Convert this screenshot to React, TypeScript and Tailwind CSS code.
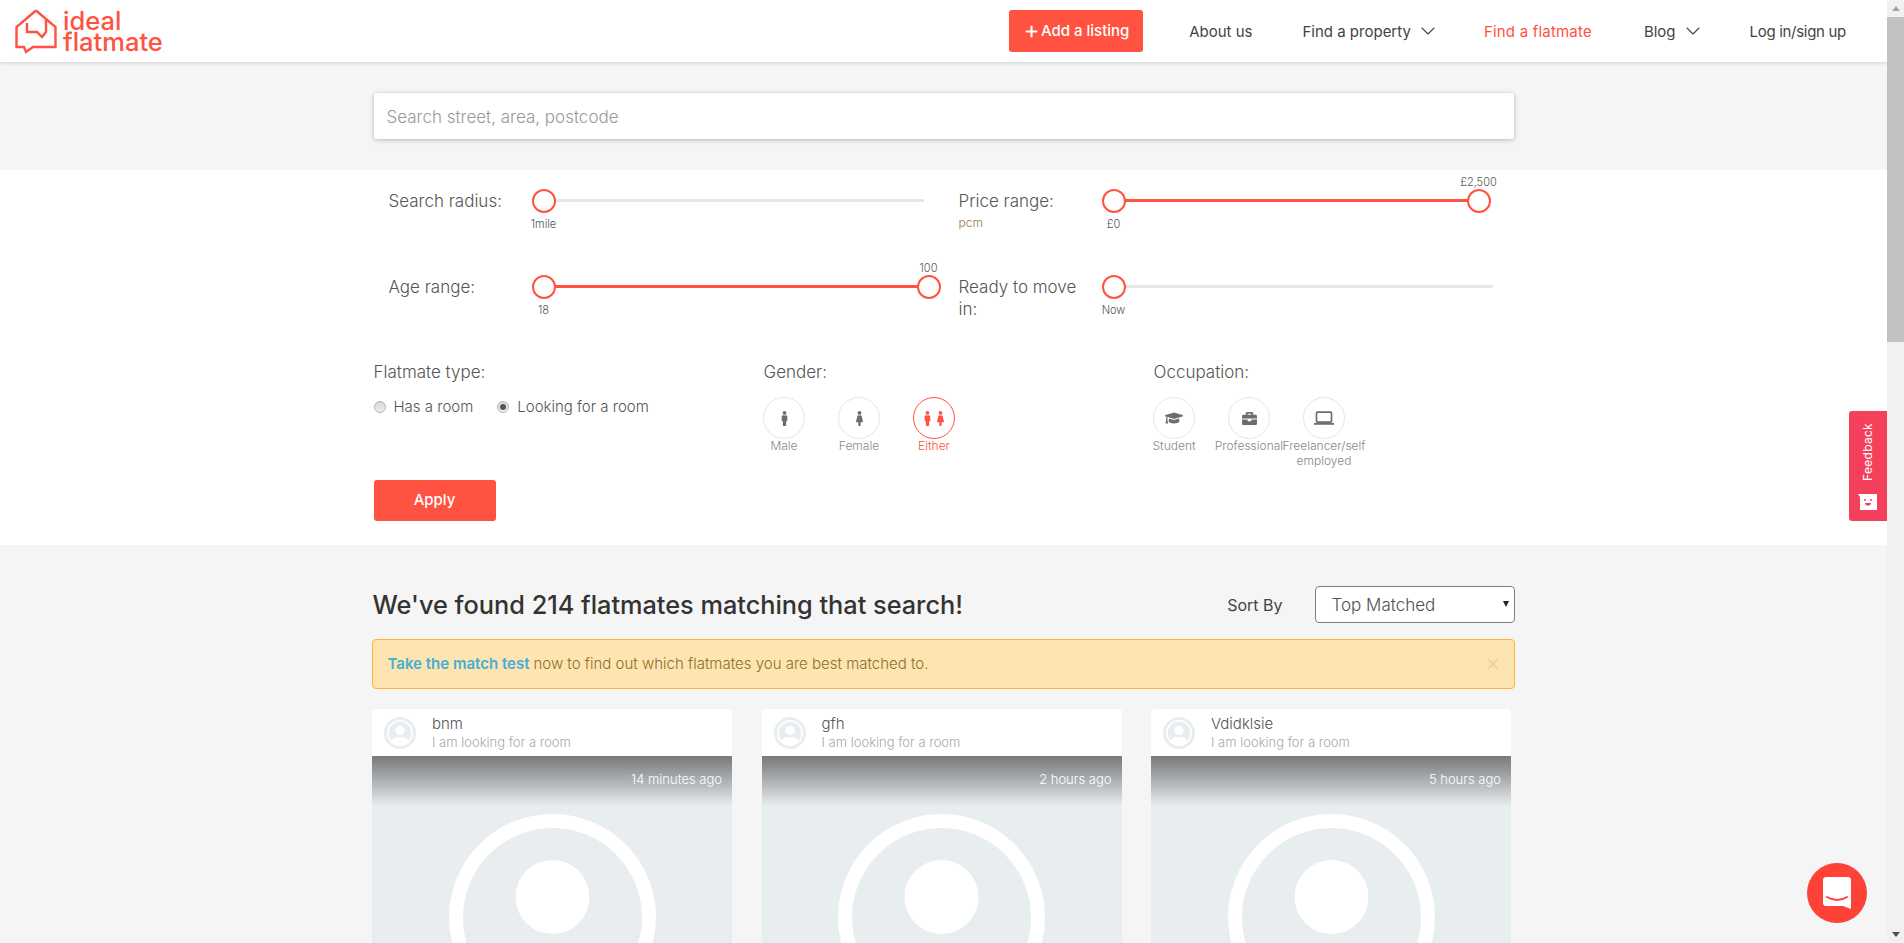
import React from "react";
import { Plus, ChevronDown, X } from "lucide-react";
import { FaMale, FaFemale, FaGraduationCap, FaBriefcase } from "react-icons/fa";
import { MdLaptop } from "react-icons/md";

const cards = [
  { name: "bnm", ago: "14 minutes ago" },
  { name: "gfh", ago: "2 hours ago" },
  { name: "Vdidklsie", ago: "5 hours ago" },
];

function Logo() {
  return (
    <div className="flex items-center">
      <svg width="42" height="45" viewBox="0 0 42 45" fill="none" stroke="#ff5240" strokeWidth="2.4">
        <path d="M21 1.5 L1.5 18 V38 H9 L11 43 L18 38 H40.5 V18 L31 10" />
        <path d="M21 1.5 L31 10 V23 L27 28 L22 23 H12 V14" />
      </svg>
      <div className="ml-[6px] text-[25.5px] leading-[21px] font-medium text-[#ff5240]">
        ideal
        <br />
        flatmate
      </div>
    </div>
  );
}

function Header() {
  return (
    <header className="relative z-10 flex h-[62px] items-center bg-white pl-[15px] pr-[41px] shadow-[0_1px_4px_rgba(0,0,0,0.15)]">
      <Logo />
      <nav className="ml-auto flex items-center text-[15px] text-[#444]">
        <a className="flex h-[42px] w-[134px] items-center justify-center rounded-[3px] bg-[#ff5240] pt-[1px] font-medium text-white">
          <Plus size={17} strokeWidth={3} />
          <span className="ml-[1px]">Add a listing</span>
        </a>
        <a className="ml-[46px] pt-[2px]">About us</a>
        <a className="ml-[50px] pt-[2px]">Find a property</a>
        <ChevronDown size={24} strokeWidth={1.1} className="ml-[5px]" />
        <a className="ml-[44px] pt-[2px] tracking-[0.2px] text-[#ff5240]">Find a flatmate</a>
        <a className="ml-[52px] pt-[2px]">Blog</a>
        <ChevronDown size={24} strokeWidth={1.1} className="ml-[5px]" />
        <a className="ml-[45px] pt-[2px] tracking-[-0.3px]">Log in/sign up</a>
      </nav>
    </header>
  );
}

function Thumb({ className }: { className: string }) {
  return <span className={"absolute top-0 h-[24px] w-[24px] rounded-full border-2 border-[#ff5240] bg-white " + className} />;
}

function SliderRow({
  label,
  note,
  fill,
  width,
  low,
  high,
}: {
  label: React.ReactNode;
  note?: string;
  fill: boolean;
  width: string;
  low: string;
  high?: string;
}) {
  return (
    <div className="flex h-[86px] items-start">
      <div className="w-[143px] pt-[1px] text-[17px] leading-[22px] font-light text-[#555]">
        {label}
        {note && <div className="mt-[3px] text-[12px] leading-[16px] text-[#a0784a]">{note}</div>}
      </div>
      <div className={"relative h-[24px] " + width}>
        <div className={"absolute top-[10px] left-[12px] right-0 h-[3px] " + (fill ? "bg-[#ff5240] right-[12px]" : "bg-[#e6e6e6]")} />
        <Thumb className="left-0" />
        {high && <Thumb className="right-0" />}
        <span className="absolute top-[27px] left-[12px] -translate-x-1/2 whitespace-nowrap text-[11px] leading-[16px] font-light text-[#555]">{low}</span>
        {high && <span className="absolute top-[-15px] right-[12px] translate-x-1/2 whitespace-nowrap text-[11px] leading-[16px] font-light text-[#555]">{high}</span>}
      </div>
    </div>
  );
}

function Radio({ checked, label }: { checked?: boolean; label: string }) {
  return (
    <div className="flex items-center">
      <span className="flex h-[12px] w-[12px] items-center justify-center rounded-full border border-[#b5b5b5] bg-gradient-to-b from-[#d8d8d8] to-[#f0f0f0]">
        {checked && <span className="h-[6px] w-[6px] rounded-full bg-[#555]" />}
      </span>
      <span className="ml-[8px] text-[15px] leading-[20px] font-light text-[#555]">{label}</span>
    </div>
  );
}

function Choice({ icon, label, active }: { icon: React.ReactNode; label: React.ReactNode; active?: boolean }) {
  return (
    <div className={"flex w-[75px] flex-col items-center text-center " + (active ? "text-[#ff5240]" : "text-[#6d6d6d]")}>
      <div className={"flex h-[42px] w-[42px] items-center justify-center rounded-full border " + (active ? "border-[#ff5240]" : "border-[#e6e6e6]")}>
        {icon}
      </div>
      <div className={"mt-[-3px] whitespace-nowrap pt-[2px] text-[12px] leading-[15px] font-light " + (active ? "text-[#ff5240]" : "text-[#888]")}>{label}</div>
    </div>
  );
}

function Filters() {
  return (
    <section className="h-[375px] bg-white">
      <div className="mx-auto w-[1144px] pl-[2px]">
        <div className="grid grid-cols-[570px_1fr] pt-[19px] pl-[15px]">
          <div>
            <SliderRow label="Search radius:" fill={false} width="w-[392px]" low="1mile" />
            <SliderRow label="Age range:" fill width="w-[409px]" low="18" high="100" />
          </div>
          <div>
            <SliderRow label={<>Price range:</>} note="pcm" fill width="w-[389px]" low="£0" high="£2,500" />
            <SliderRow label={<>Ready to move<br />in:</>} fill={false} width="w-[391px]" low="Now" />
          </div>
        </div>
        <div className="grid grid-cols-[390px_390px_1fr]">
          <div>
            <div className="text-[17px] leading-[22px] font-light text-[#555]">Flatmate type:</div>
            <div className="mt-[14px] flex gap-[24px]">
              <Radio label="Has a room" />
              <Radio checked label="Looking for a room" />
            </div>
          </div>
          <div>
            <div className="text-[17px] leading-[22px] font-light text-[#555]">Gender:</div>
            <div className="mt-[14px] ml-[-17px] flex">
              <Choice icon={<FaMale size={15} />} label="Male" />
              <Choice icon={<FaFemale size={15} />} label="Female" />
              <Choice
                active
                icon={
                  <span className="flex">
                    <FaMale size={15} />
                    <FaFemale size={15} className="ml-[-2px]" />
                  </span>
                }
                label="Either"
              />
            </div>
          </div>
          <div>
            <div className="text-[17px] leading-[22px] font-light text-[#555]">Occupation:</div>
            <div className="mt-[14px] ml-[-17px] flex">
              <Choice icon={<FaGraduationCap size={18} />} label="Student" />
              <Choice icon={<FaBriefcase size={15} />} label="Professional" />
              <Choice icon={<MdLaptop size={20} />} label={<>Freelancer/self<br />employed</>} />
            </div>
          </div>
        </div>
        <button className="mt-[12px] block h-[41px] w-[122px] rounded-[3px] bg-[#ff5240] text-[15px] font-medium text-white">Apply</button>
      </div>
    </section>
  );
}

function UserCircle({ size }: { size: number }) {
  return (
    <svg width={size} height={size} viewBox="0 0 207 207" fill="none">
      <circle cx="103.5" cy="103.5" r="96.5" stroke="#fff" strokeWidth="14" />
      <circle cx="103.5" cy="83" r="37" fill="#fff" />
      <path d="M34 176 C44 140 70 136 103.5 136 C137 136 163 140 173 176 C155 192 130 200 103.5 200 C77 200 52 192 34 176 Z" fill="#fff" />
    </svg>
  );
}

function Card({ name, ago }: { name: string; ago: string }) {
  return (
    <div className="w-[360px] overflow-hidden rounded-t-[4px]">
      <div className="flex h-[47px] items-center bg-white pl-[12px]">
        <div className="flex h-[32px] w-[32px] items-center justify-center rounded-full bg-[#e8edf0]">
          <UserCircle size={26} />
        </div>
        <div className="ml-[16px] pt-[1px]">
          <div className="text-[15px] leading-[18px] font-light text-[#555]">{name}</div>
          <div className="text-[13px] leading-[19px] font-light text-[#a9a9a9]">I am looking for a room</div>
        </div>
      </div>
      <div className="relative flex h-[400px] justify-center bg-[#e8edf0] pt-[58px]">
        <div className="absolute inset-x-0 top-0 h-[50px] bg-gradient-to-b from-[#77797b] to-[#e8edf0]" />
        <span className="absolute top-[14px] right-[10px] text-[13px] leading-[18px] font-light text-white">{ago}</span>
        <UserCircle size={207} />
      </div>
    </div>
  );
}

function Results() {
  return (
    <section className="mx-auto w-[1144px]">
      <div className="flex items-center pt-[41px] pr-[1px]">
        <h1 className="ml-[1px] text-[25.3px] leading-[36px] font-medium text-[#333]">We've found 214 flatmates matching that search!</h1>
        <span className="ml-auto text-[16px] font-normal text-[#444]">Sort By</span>
        <div className="relative ml-[32px]">
          <select className="block h-[37px] w-[200px] appearance-none rounded-[4px] border border-[#7f7f7f] bg-white pt-[2px] pl-[16px] text-[17px] font-light text-[#495057]">
            <option>Top Matched</option>
          </select>
          {/* native-looking arrow */}
          <span className="pointer-events-none absolute top-[15px] right-[6px] border-x-[3.5px] border-t-[6px] border-x-transparent border-t-[#222]" />
        </div>
      </div>
      <div className="mt-[16px] mr-[1px] flex h-[50px] items-center rounded-[4px] border border-[#fdb52f] bg-[#fee4b0] pl-[15px] pr-[13px] text-[15px] font-light text-[#8d6f2c]">
        <span className="font-semibold text-[#45aed6]">Take the match test</span>
        <span className="ml-[4px]">now to find out which flatmates you are best matched to.</span>
        <X size={16} strokeWidth={3.5} className="ml-auto text-[#e8d6a4]" />
      </div>
      <div className="mt-[20px] ml-[0.5px] flex gap-[29.5px]">
        {cards.map((c) => (
          <Card key={c.name} {...c} />
        ))}
      </div>
    </section>
  );
}

function Scrollbar() {
  return (
    <div className="flex w-[17px] shrink-0 flex-col items-center bg-[#f1f1f1]">
      <div className="flex h-[17px] items-center justify-center">
        <span className="border-x-[4px] border-b-[5px] border-x-transparent border-b-[#a3a3a3]" />
      </div>
      <div className="h-[325px] w-full bg-[#c1c1c1]" />
      <div className="mt-auto flex h-[17px] items-center justify-center">
        <span className="border-x-[4px] border-t-[5px] border-x-transparent border-t-[#505050]" />
      </div>
    </div>
  );
}

export default function App() {
  return (
    <div className="flex h-screen overflow-hidden bg-[#f5f5f5] font-['Inter','Liberation_Sans',sans-serif]">
      <main className="relative min-w-0 flex-1 overflow-hidden">
        <Header />
        <div className="h-[108px] pt-[31px]">
          <div className="mx-auto w-[1144px] pl-[2px]">
            <input
              placeholder="Search street, area, postcode"
              className="h-[46px] w-[1140px] rounded-[3px] bg-white pt-[1px] pl-[13px] pr-[12px] text-[17px] font-light shadow-[0_1px_5px_rgba(0,0,0,0.25)] outline-none placeholder:text-[#999]"
            />
          </div>
        </div>
        <Filters />
        <Results />
        {/* feedback tab */}
        <div className="absolute top-[411px] right-0 flex h-[110px] w-[38px] flex-col items-center rounded-l-[3px] bg-[#f4405a] pt-[12px]">
          <span className="rotate-180 text-[12px] leading-[14px] tracking-[0.3px] text-white [writing-mode:vertical-rl]">Feedback</span>
          <svg width="20" height="16" viewBox="0 0 20 16" className="mt-[13px]">
            <path d="M0 0 H19 V16 H2 V3 Z" fill="#fff" />
            <circle cx="7" cy="6" r="1" fill="#f4405a" />
            <circle cx="13" cy="6" r="1" fill="#f4405a" />
            <path d="M7 9 H13 C13 12.5 7 12.5 7 9 Z" fill="#f4405a" />
          </svg>
        </div>
        {/* chat launcher */}
        <div className="absolute right-[20px] bottom-[20px] flex h-[60px] w-[60px] items-center justify-center rounded-full bg-[#ff4238]">
          <svg width="28" height="32" viewBox="0 0 28 32">
            <path d="M3 0 H25 C26.7 0 28 1.3 28 3 V32 L20 29 H3 C1.3 29 0 27.7 0 26 V3 C0 1.3 1.3 0 3 0 Z" fill="#fff" />
            <path d="M4 20 C10 24 18 24 24 20" fill="none" stroke="#ff4238" strokeWidth="2" strokeLinecap="round" />
          </svg>
        </div>
      </main>
      <Scrollbar />
    </div>
  );
}
